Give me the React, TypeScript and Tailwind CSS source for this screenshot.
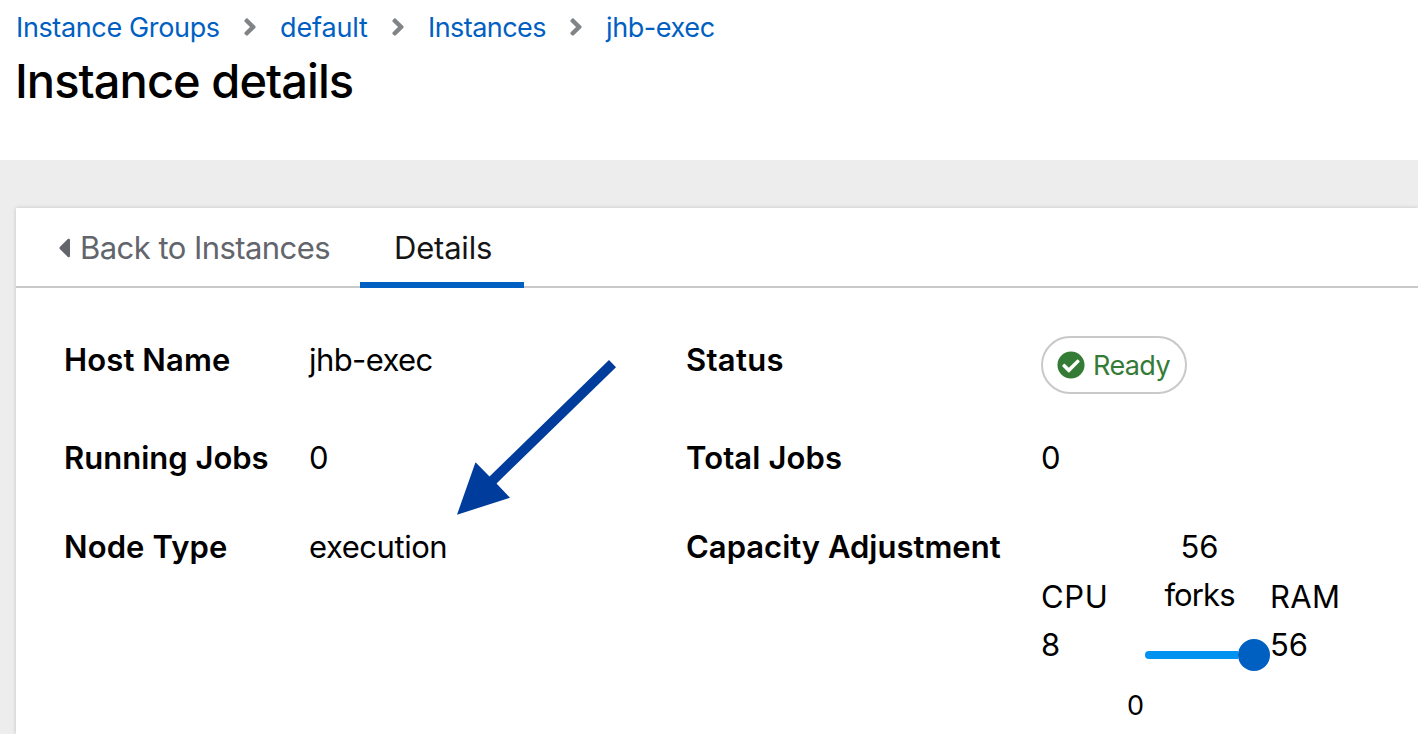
import React from "react";
import { FaCheckCircle } from "react-icons/fa";

function AngleRight() {
  return (
    <svg viewBox="0 0 256 512" className="h-7 w-3.5 shrink-0 text-[#818487]" fill="currentColor" aria-hidden="true">
      <path d="M224.3 273l-136 136c-9.4 9.4-24.6 9.4-33.9 0l-22.6-22.6c-9.4-9.4-9.4-24.6 0-33.9l96.4-96.4-96.4-96.4c-9.4-9.4-9.4-24.6 0-33.9L54.3 103c9.4-9.4 24.6-9.4 33.9 0l136 136c9.5 9.4 9.5 24.6.1 34z" />
    </svg>
  );
}

function CaretLeft() {
  return (
    <svg viewBox="0 0 192 512" className="h-8 w-3 shrink-0" fill="currentColor" aria-hidden="true">
      <path d="M192 127.338v257.324c0 17.818-21.543 26.741-34.142 14.142L29.196 270.142c-7.81-7.81-7.81-20.474 0-28.284l128.662-128.662c12.599-12.6 34.142-3.676 34.142 14.142z" />
    </svg>
  );
}

function Breadcrumb() {
  return (
    <nav className="flex h-[54px] items-center pl-4 text-[27px] text-[#0060c2]">
      <a className="w-[229px] pt-0.5 tracking-[-0.36px]">Instance Groups</a>
      <span className="-ml-0.5 w-[37px]"><AngleRight /></span>
      <a className="w-[112px] pt-0.5 tracking-[-0.15px]">default</a>
      <span className="-ml-px w-[37px]"><AngleRight /></span>
      <a className="w-[142px] pt-0.5 tracking-[-0.55px]">Instances</a>
      <span className="-ml-px w-[37px]"><AngleRight /></span>
      <a className="pt-0.5 tracking-[-0.4px]">jhb-exec</a>
    </nav>
  );
}

function Tabs() {
  return (
    <div className="flex h-20 border-b-2 border-[#c9c9c9]">
      <button className="flex h-20 w-[344px] shrink-0 items-center pl-[42px] text-[31px] tracking-[-0.55px] text-[#62656b]">
        <CaretLeft />
        <span className="ml-2.5">Back to Instances</span>
      </button>
      <button className="h-20 w-[164px] border-b-6 border-[#0060c2] pt-1.5 pr-0 pl-[34px] text-left text-[31px] tracking-[-0.2px] text-[#151515]">
        Details
      </button>
    </div>
  );
}

function Label({ children }: { children: React.ReactNode }) {
  return <dt className="font-semibold whitespace-nowrap">{children}</dt>;
}

function StatusBadge() {
  return (
    <span className="flex h-[58px] w-[146px] items-center rounded-full border-2 border-[#c9c9c9] pl-3.5 text-[27px] tracking-[-0.6px] text-[#347c36]">
      <FaCheckCircle className="size-7 shrink-0" />
      <span className="ml-2 pt-0.5">Ready</span>
    </span>
  );
}

function CapacitySlider() {
  return (
    <dd className="flex items-start">
      <div className="w-[88px] pt-[50px]">
        <div className="tracking-[0.6px]">CPU</div>
        <div>8</div>
      </div>
      <div className="w-[141px]">
        <div className="text-center">56</div>
        <div className="text-center tracking-[-0.9px]">forks</div>
        <div className="mt-5 ml-4 flex h-8 items-center">
          <div className="h-2 w-[93px] rounded-l-full bg-[#0092f0]" />
          <div className="size-8 rounded-full bg-[#0060c2]" />
        </div>
        <div className="-ml-0.5 pt-[11px] text-[27px]">0</div>
      </div>
      <div className="pt-[50px]">
        <div className="tracking-[0.3px]">RAM</div>
        <div>56</div>
      </div>
    </dd>
  );
}

function Arrow() {
  return (
    <svg className="absolute top-[360px] left-[457px]" width="160" height="156" viewBox="457 360 160 156" aria-hidden="true">
      <path d="M457 514.7L475.5 462.3L489.5 476.5L609 360L616 367.3L496.5 483.5L510 497.8Z" fill="#003c9c" />
    </svg>
  );
}

export default function App() {
  return (
    <div className="relative flex h-[734px] w-full flex-col overflow-hidden bg-[#ededed] font-['Inter',sans-serif] text-black">
      <header className="h-40 shrink-0 bg-white">
        <Breadcrumb />
        <h1 className="pl-[15px] text-[47px] leading-[54px] font-medium tracking-[-0.95px]">Instance details</h1>
      </header>
      <main className="mt-12 ml-4 flex-1 bg-white shadow-[0_0_4px_rgba(0,0,0,0.18)]">
        <Tabs />
        <dl className="grid grid-cols-[245px_377px_355px_1fr] grid-rows-[98px_89px_auto] pt-12 pl-12 text-[31px] leading-[48px]">
          <Label><span className="tracking-[0.12px]">Host Name</span></Label>
          <dd className="tracking-[-0.6px]">jhb-exec</dd>
          <Label><span className="tracking-[0.3px]">Status</span></Label>
          <dd><StatusBadge /></dd>
          <Label>Running Jobs</Label>
          <dd>0</dd>
          <Label><span className="tracking-[0.12px]">Total Jobs</span></Label>
          <dd>0</dd>
          <Label><span className="tracking-[0.12px]">Node Type</span></Label>
          <dd className="tracking-[-0.45px]">execution</dd>
          <Label>Capacity Adjustment</Label>
          <CapacitySlider />
        </dl>
      </main>
      <Arrow />
    </div>
  );
}
